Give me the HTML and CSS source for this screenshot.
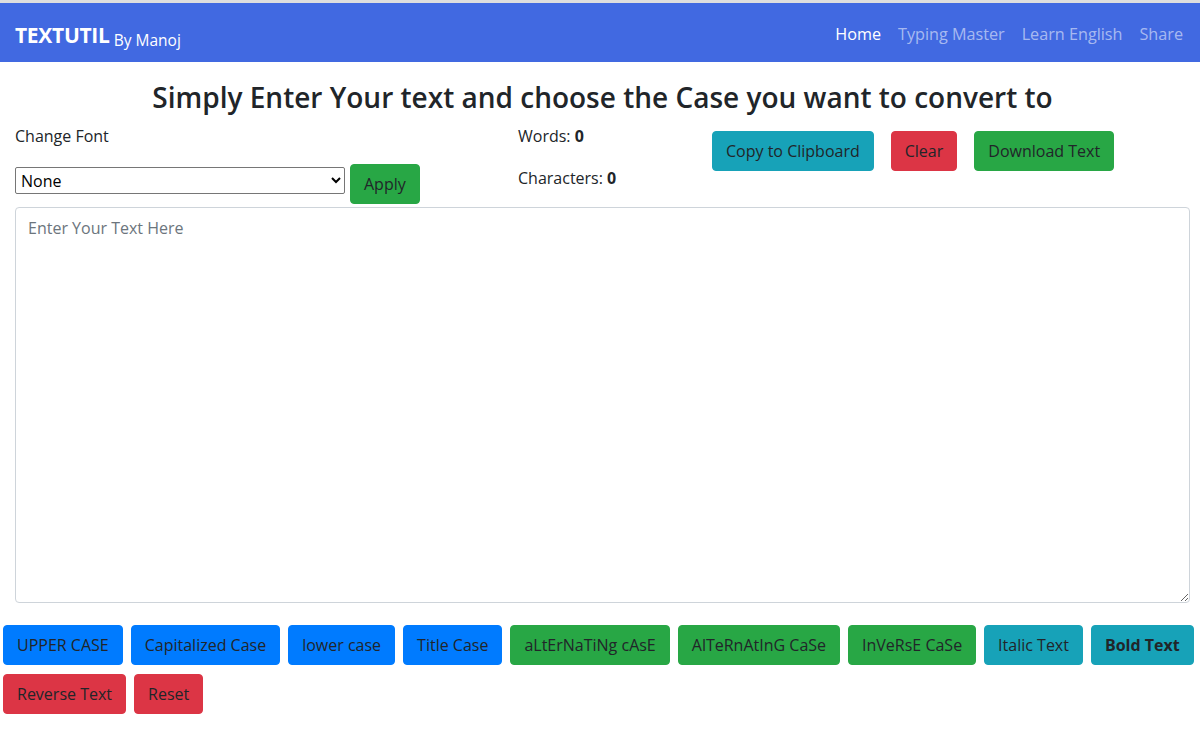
FILE: index.html
```html
<!DOCTYPE html>
<html lang="en">
<head>
<meta charset="utf-8">
<title>TextUtil</title>
<link rel="stylesheet" href="styles.css">
</head>
<body>
<div class="topline"></div>
<nav class="navbar">
  <div class="brand"><span class="brand-name">TEXTUTIL</span> <span class="brand-by">By Manoj</span></div>
  <ul class="nav-links">
    <li class="active">Home</li>
    <li>Typing Master</li>
    <li>Learn English</li>
    <li>Share</li>
  </ul>
</nav>
<main class="main">
  <h2 class="title">Simply Enter Your text and choose the Case you want to convert to</h2>
  <div class="controls">
    <div class="font-col">
      <div class="label">Change Font</div>
      <div class="font-row">
        <select class="font-select"><option>None</option></select>
        <button class="btn btn-green">Apply</button>
      </div>
    </div>
    <div class="stats">
      <div>Words: <b>0</b></div>
      <div>Characters: <b>0</b></div>
    </div>
    <div class="actions">
      <button class="btn btn-teal">Copy to Clipboard</button>
      <button class="btn btn-red">Clear</button>
      <button class="btn btn-green">Download Text</button>
    </div>
  </div>
  <textarea class="text" placeholder="Enter Your Text Here"></textarea>
</main>
<div class="case-bar">
  <button class="btn btn-blue">UPPER CASE</button>
  <button class="btn btn-blue">Capitalized Case</button>
  <button class="btn btn-blue">lower case</button>
  <button class="btn btn-blue">Title Case</button>
  <button class="btn btn-green">aLtErNaTiNg cAsE</button>
  <button class="btn btn-green">AlTeRnAtInG CaSe</button>
  <button class="btn btn-green">InVeRsE CaSe</button>
  <button class="btn btn-teal">Italic Text</button>
  <button class="btn btn-teal bold">Bold Text</button>
  <button class="btn btn-red">Reverse Text</button>
  <button class="btn btn-red">Reset</button>
</div>
</body>
</html>
```
FILE: styles.css
```css
* { box-sizing: border-box; }
body {
  margin: 0;
  font-family: "Open Sans", "Noto Sans", sans-serif;
  font-size: 16px;
  color: #212529;
  background: #fff;
}
.topline { height: 3px; background: #dedede; }
.navbar {
  height: 59px;
  background: #4169e1;
  display: flex;
  align-items: center;
  justify-content: space-between;
  padding: 0 17px 0 15px;
}
.brand { color: #fff; padding-top: 4px; }
.brand-name { font-weight: 700; font-size: 21px; letter-spacing: -0.3px; }
.brand-by { font-size: 15.5px; position: relative; top: 3px; }
.nav-links {
  list-style: none;
  margin: 0;
  padding: 2px 0 0;
  display: flex;
  gap: 17px;
  font-size: 16.2px;
  color: rgba(255,255,255,0.55);
}
.nav-links .active { color: #fff; }
.main { padding: 0 10px 0 15px; }
.title {
  margin: 17px 0 0;
  text-align: center;
  font-size: 28px;
  font-weight: 600;
  line-height: 36px;
}
.controls {
  display: flex;
  margin-top: 3px;
}
.font-col { width: 503px; }
.label { line-height: 24px; padding-top: 6px; }
.font-row { display: flex; align-items: flex-start; gap: 5px; margin-top: 16px; }
.font-select {
  width: 330px;
  height: 27px;
  margin-top: 3px;
  font-family: inherit;
  font-size: 16px;
  border: 1px solid #767676;
  border-radius: 2px;
  background: #fff;
  color: #000;
  padding: 0 1px;
}
.stats { width: 194px; display: flex; flex-direction: column; gap: 18px; padding-top: 6px; }
.stats div { line-height: 24px; }
.actions { display: flex; gap: 17px; padding-top: 13px; align-items: flex-start; }
.btn {
  font-family: inherit;
  font-size: 16px;
  line-height: 24px;
  padding: 7px 13px;
  border: 1px solid transparent;
  border-radius: 4px;
  color: #212529;
  cursor: pointer;
}
.btn-blue { background: #007bff; border-color: #007bff; }
.btn-green { background: #28a745; border-color: #28a745; }
.btn-red { background: #dc3545; border-color: #dc3545; }
.btn-teal { background: #17a2b8; border-color: #17a2b8; }
.bold { font-weight: 700; }
.text {
  display: block;
  width: 1175px;
  height: 396px;
  margin-top: 3px;
  border: 1px solid #ced4da;
  border-radius: 4px;
  padding: 8px 12px;
  font-family: inherit;
  font-size: 16px;
  line-height: 24px;
  color: #495057;
  resize: vertical;
}
.text::placeholder { color: #6c757d; }
.case-bar {
  display: flex;
  flex-wrap: wrap;
  gap: 9px 8px;
  padding: 22px 3px 0;
}
```
